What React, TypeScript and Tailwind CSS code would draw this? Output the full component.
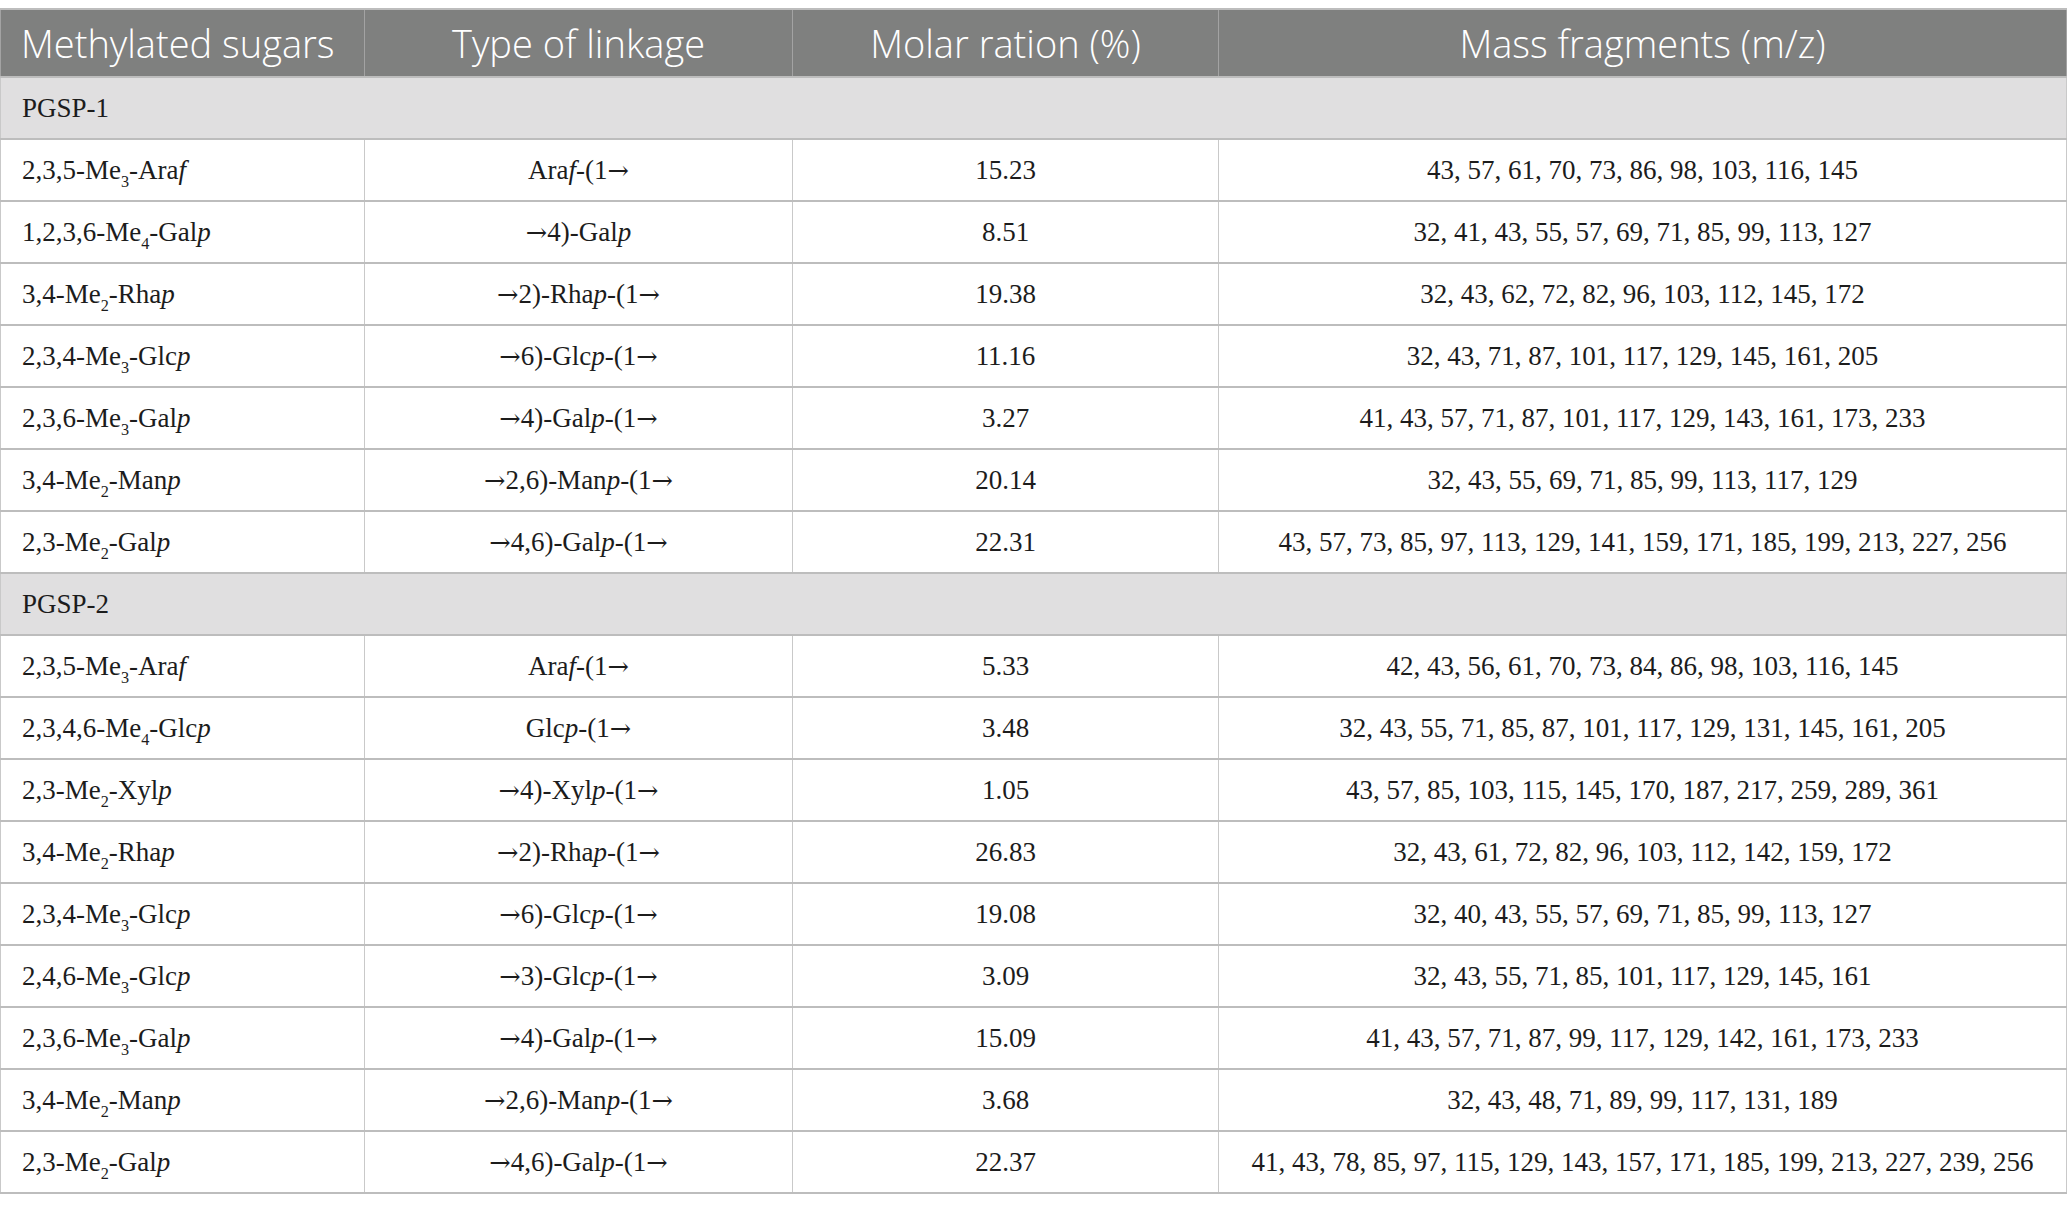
import React from 'react'

type Row = [string, string, string, string]

const groups: { label: string; rows: Row[] }[] = [
  {
    label: 'PGSP-1',
    rows: [
      ['2,3,5-Me_3_-Ara*f*', 'Ara*f*-(1→', '15.23', '43, 57, 61, 70, 73, 86, 98, 103, 116, 145'],
      ['1,2,3,6-Me_4_-Gal*p*', '→4)-Gal*p*', '8.51', '32, 41, 43, 55, 57, 69, 71, 85, 99, 113, 127'],
      ['3,4-Me_2_-Rha*p*', '→2)-Rha*p*-(1→', '19.38', '32, 43, 62, 72, 82, 96, 103, 112, 145, 172'],
      ['2,3,4-Me_3_-Glc*p*', '→6)-Glc*p*-(1→', '11.16', '32, 43, 71, 87, 101, 117, 129, 145, 161, 205'],
      ['2,3,6-Me_3_-Gal*p*', '→4)-Gal*p*-(1→', '3.27', '41, 43, 57, 71, 87, 101, 117, 129, 143, 161, 173, 233'],
      ['3,4-Me_2_-Man*p*', '→2,6)-Man*p*-(1→', '20.14', '32, 43, 55, 69, 71, 85, 99, 113, 117, 129'],
      ['2,3-Me_2_-Gal*p*', '→4,6)-Gal*p*-(1→', '22.31', '43, 57, 73, 85, 97, 113, 129, 141, 159, 171, 185, 199, 213, 227, 256'],
    ],
  },
  {
    label: 'PGSP-2',
    rows: [
      ['2,3,5-Me_3_-Ara*f*', 'Ara*f*-(1→', '5.33', '42, 43, 56, 61, 70, 73, 84, 86, 98, 103, 116, 145'],
      ['2,3,4,6-Me_4_-Glc*p*', 'Glc*p*-(1→', '3.48', '32, 43, 55, 71, 85, 87, 101, 117, 129, 131, 145, 161, 205'],
      ['2,3-Me_2_-Xyl*p*', '→4)-Xyl*p*-(1→', '1.05', '43, 57, 85, 103, 115, 145, 170, 187, 217, 259, 289, 361'],
      ['3,4-Me_2_-Rha*p*', '→2)-Rha*p*-(1→', '26.83', '32, 43, 61, 72, 82, 96, 103, 112, 142, 159, 172'],
      ['2,3,4-Me_3_-Glc*p*', '→6)-Glc*p*-(1→', '19.08', '32, 40, 43, 55, 57, 69, 71, 85, 99, 113, 127'],
      ['2,4,6-Me_3_-Glc*p*', '→3)-Glc*p*-(1→', '3.09', '32, 43, 55, 71, 85, 101, 117, 129, 145, 161'],
      ['2,3,6-Me_3_-Gal*p*', '→4)-Gal*p*-(1→', '15.09', '41, 43, 57, 71, 87, 99, 117, 129, 142, 161, 173, 233'],
      ['3,4-Me_2_-Man*p*', '→2,6)-Man*p*-(1→', '3.68', '32, 43, 48, 71, 89, 99, 117, 131, 189'],
      ['2,3-Me_2_-Gal*p*', '→4,6)-Gal*p*-(1→', '22.37', '41, 43, 78, 85, 97, 115, 129, 143, 157, 171, 185, 199, 213, 227, 239, 256'],
    ],
  },
]

// tiny markup: _3_ = subscript, *p* = italic, → gets its own font
function Chem({ text }: { text: string }) {
  const parts = text.split(/(_\d_|\*[a-z]\*|→)/)
  return (
    <>
      {parts.map((p, i) => {
        if (/^_\d_$/.test(p)) return <sub key={i} className="text-[0.6em] align-[-0.25em] leading-none">{p[1]}</sub>
        if (/^\*[a-z]\*$/.test(p)) return <i key={i}>{p[1]}</i>
        if (p === '→')
          return (
            <span key={i} className="text-[0.95em]" style={{ fontFamily: '"DejaVu Serif", serif' }}>
              →
            </span>
          )
        return <React.Fragment key={i}>{p}</React.Fragment>
      })}
    </>
  )
}

const headCell = 'border-x border-[#a3a3a3] font-light text-white'
const cell = 'border-x border-[#c9c9c9]'

export default function App() {
  return (
    <div className="bg-white w-[2067px] h-[1211px] pt-2">
      <table
        className="w-full table-fixed border-collapse text-[27px] text-[#1c1c1c]"
        style={{ fontFamily: '"Liberation Serif", "Times New Roman", serif' }}
      >
        <colgroup>
          <col className="w-[364px]" />
          <col className="w-[428px]" />
          <col className="w-[426px]" />
          <col />
        </colgroup>
        <thead>
          <tr
            className="h-[68px] bg-[#7f807f] border-y-2 border-[#bdbdbd] text-[38px]"
            style={{ fontFamily: '"Open Sans", "Noto Sans", sans-serif' }}
          >
            <th className={`${headCell} text-left pl-[20px]`}>Methylated sugars</th>
            <th className={headCell}>Type of linkage</th>
            <th className={headCell}>Molar ration (%)</th>
            <th className={headCell}>Mass fragments (m/z)</th>
          </tr>
        </thead>
        <tbody>
          {groups.map(g => (
            <React.Fragment key={g.label}>
              <tr className="h-[62px] bg-[#e0dfe0] border-y-2 border-[#bdbdbd]">
                <td colSpan={4} className="border-x border-[#c9c9c9] pl-[21px]">{g.label}</td>
              </tr>
              {g.rows.map((r, i) => (
                <tr key={i} className="h-[62px] border-y-2 border-[#bdbdbd]">
                  <td className={`${cell} pl-[21px]`}><Chem text={r[0]} /></td>
                  <td className={`${cell} text-center`}><Chem text={r[1]} /></td>
                  <td className={`${cell} text-center`}>{r[2]}</td>
                  <td className={`${cell} text-center`}>{r[3]}</td>
                </tr>
              ))}
            </React.Fragment>
          ))}
        </tbody>
      </table>
    </div>
  )
}
